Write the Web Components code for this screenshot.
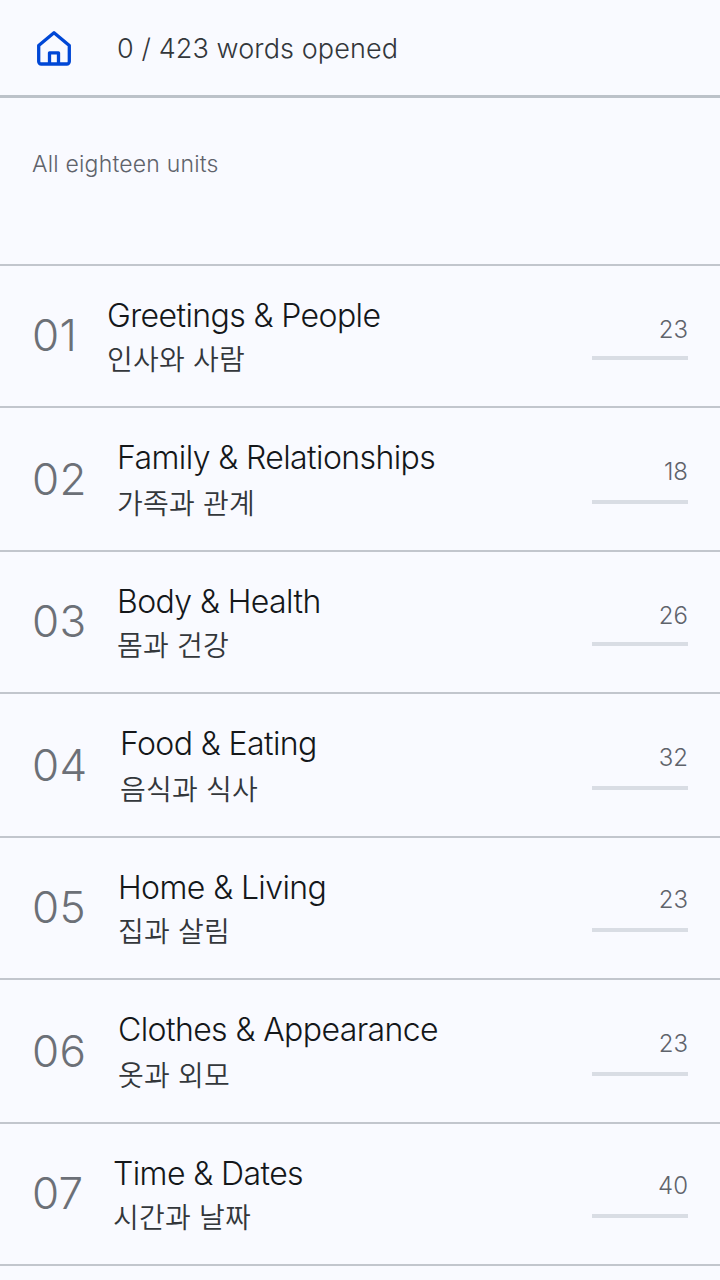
<!DOCTYPE html>
<html lang="en">
<head>
<meta charset="utf-8">
<title>Units</title>
<style>
  html, body { margin: 0; background: #f9faff; }
  body { font-family: Inter, "Noto Sans CJK KR", sans-serif; height: 1280px; overflow: hidden; }
</style>
</head>
<body>
<top-bar opened="0" total="423"></top-bar>
<unit-list heading="All eighteen units">
  <unit-row num="01" title="Greetings &amp; People" ko="인사와 사람" count="23" numw="43"></unit-row>
  <unit-row num="02" title="Family &amp; Relationships" ko="가족과 관계" count="18" numw="53" tall></unit-row>
  <unit-row num="03" title="Body &amp; Health" ko="몸과 건강" count="26" numw="53"></unit-row>
  <unit-row num="04" title="Food &amp; Eating" ko="음식과 식사" count="32" numw="56" tall></unit-row>
  <unit-row num="05" title="Home &amp; Living" ko="집과 살림" count="23" numw="54" high></unit-row>
  <unit-row num="06" title="Clothes &amp; Appearance" ko="옷과 외모" count="23" numw="54" tall></unit-row>
  <unit-row num="07" title="Time &amp; Dates" ko="시간과 날짜" count="40" numw="49" high></unit-row>
</unit-list>
<script>
class TopBar extends HTMLElement {
  constructor() {
    super();
    const shadow = this.attachShadow({ mode: 'open' });
    shadow.innerHTML = `
      <style>
        :host { display: flex; align-items: center; height: 95px; border-bottom: 3px solid #bcc2c9; padding-left: 36px; gap: 45px; }
        svg { display: block; width: 36px; height: 36px; margin-top: 1px; flex: none; }
        span { padding-top: 2px; font-size: 27px; font-weight: 300; letter-spacing: 0.1px; color: #33373b; }
      </style>
      <svg viewBox="0 0 36 36" fill="none" stroke="#0047d6" stroke-width="3.3" stroke-linejoin="round">
        <path d="M2.700 15.500 18 2.700l15.300 12.800v16a2.500 2.500 0 0 1-2.500 2.500H5.200a2.500 2.500 0 0 1-2.500-2.500z"/>
        <path d="M13.500 34V22.800h9V34"/>
      </svg>
      <span></span>`;
    shadow.querySelector('span').textContent =
      `${this.getAttribute('opened')} / ${this.getAttribute('total')} words opened`;
  }
}

class UnitList extends HTMLElement {
  constructor() {
    super();
    const shadow = this.attachShadow({ mode: 'open' });
    shadow.innerHTML = `
      <style>
        :host { display: block; }
        header { height: 166px; box-sizing: border-box; padding: 51px 32px 0; font-size: 23px; font-weight: 300; letter-spacing: 0.2px; line-height: 30px; color: #5f636b; }
        .rows { display: flex; flex-direction: column; border-top: 2px solid #c2c6cd; }
      </style>
      <header></header>
      <div class="rows"><slot></slot></div>`;
    shadow.querySelector('header').textContent = this.getAttribute('heading');
  }
}

class UnitRow extends HTMLElement {
  constructor() {
    super();
    const shadow = this.attachShadow({ mode: 'open' });
    shadow.innerHTML = `
      <style>
        :host { display: flex; align-items: flex-start; box-sizing: border-box; height: 142px; border-bottom: 2px solid #c2c6cd; padding: 0 32px; gap: 32px; }
        :host([tall]) { height: 144px; }
        .num { flex: none; margin-top: 39px; font-size: 44px; line-height: 60px; font-weight: 300; letter-spacing: 0.2px; color: #6c7077; }
        :host([tall]) .num { margin-top: 41px; }
        .text { flex: 1; min-width: 0; margin-top: 30px; display: flex; flex-direction: column; }
        .title { font-size: 32px; line-height: 40px; color: #14171a; font-weight: 300; letter-spacing: -0.6px; }
        .ko { margin-top: 6px; font-size: 28px; line-height: 36px; letter-spacing: 0.2px; color: #33373b; font-weight: 350; }
        :host([tall]) .ko { margin-top: 8px; }
        .side { flex: none; width: 96px; margin-top: 49px; display: flex; flex-direction: column; align-items: flex-end; gap: 11px; }
        :host([tall]) .side { gap: 13px; }
        :host([high]) .side { margin-top: 47px; gap: 13px; }
        .count { font-size: 24px; line-height: 30px; font-weight: 300; color: #5f636b; }
        .bar { width: 100%; height: 4px; background: #d9dde4; }
      </style>
      <div class="num"></div>
      <div class="text"><div class="title"></div><div class="ko"></div></div>
      <div class="side"><div class="count"></div><div class="bar"></div></div>`;
    const get = (name) => this.getAttribute(name);
    shadow.querySelector('.num').textContent = get('num');
    shadow.querySelector('.num').style.width = get('numw') + 'px';
    shadow.querySelector('.title').textContent = get('title');
    shadow.querySelector('.ko').textContent = get('ko');
    shadow.querySelector('.count').textContent = get('count');
  }
}

customElements.define('top-bar', TopBar);
customElements.define('unit-list', UnitList);
customElements.define('unit-row', UnitRow);
</script>
</body>
</html>
